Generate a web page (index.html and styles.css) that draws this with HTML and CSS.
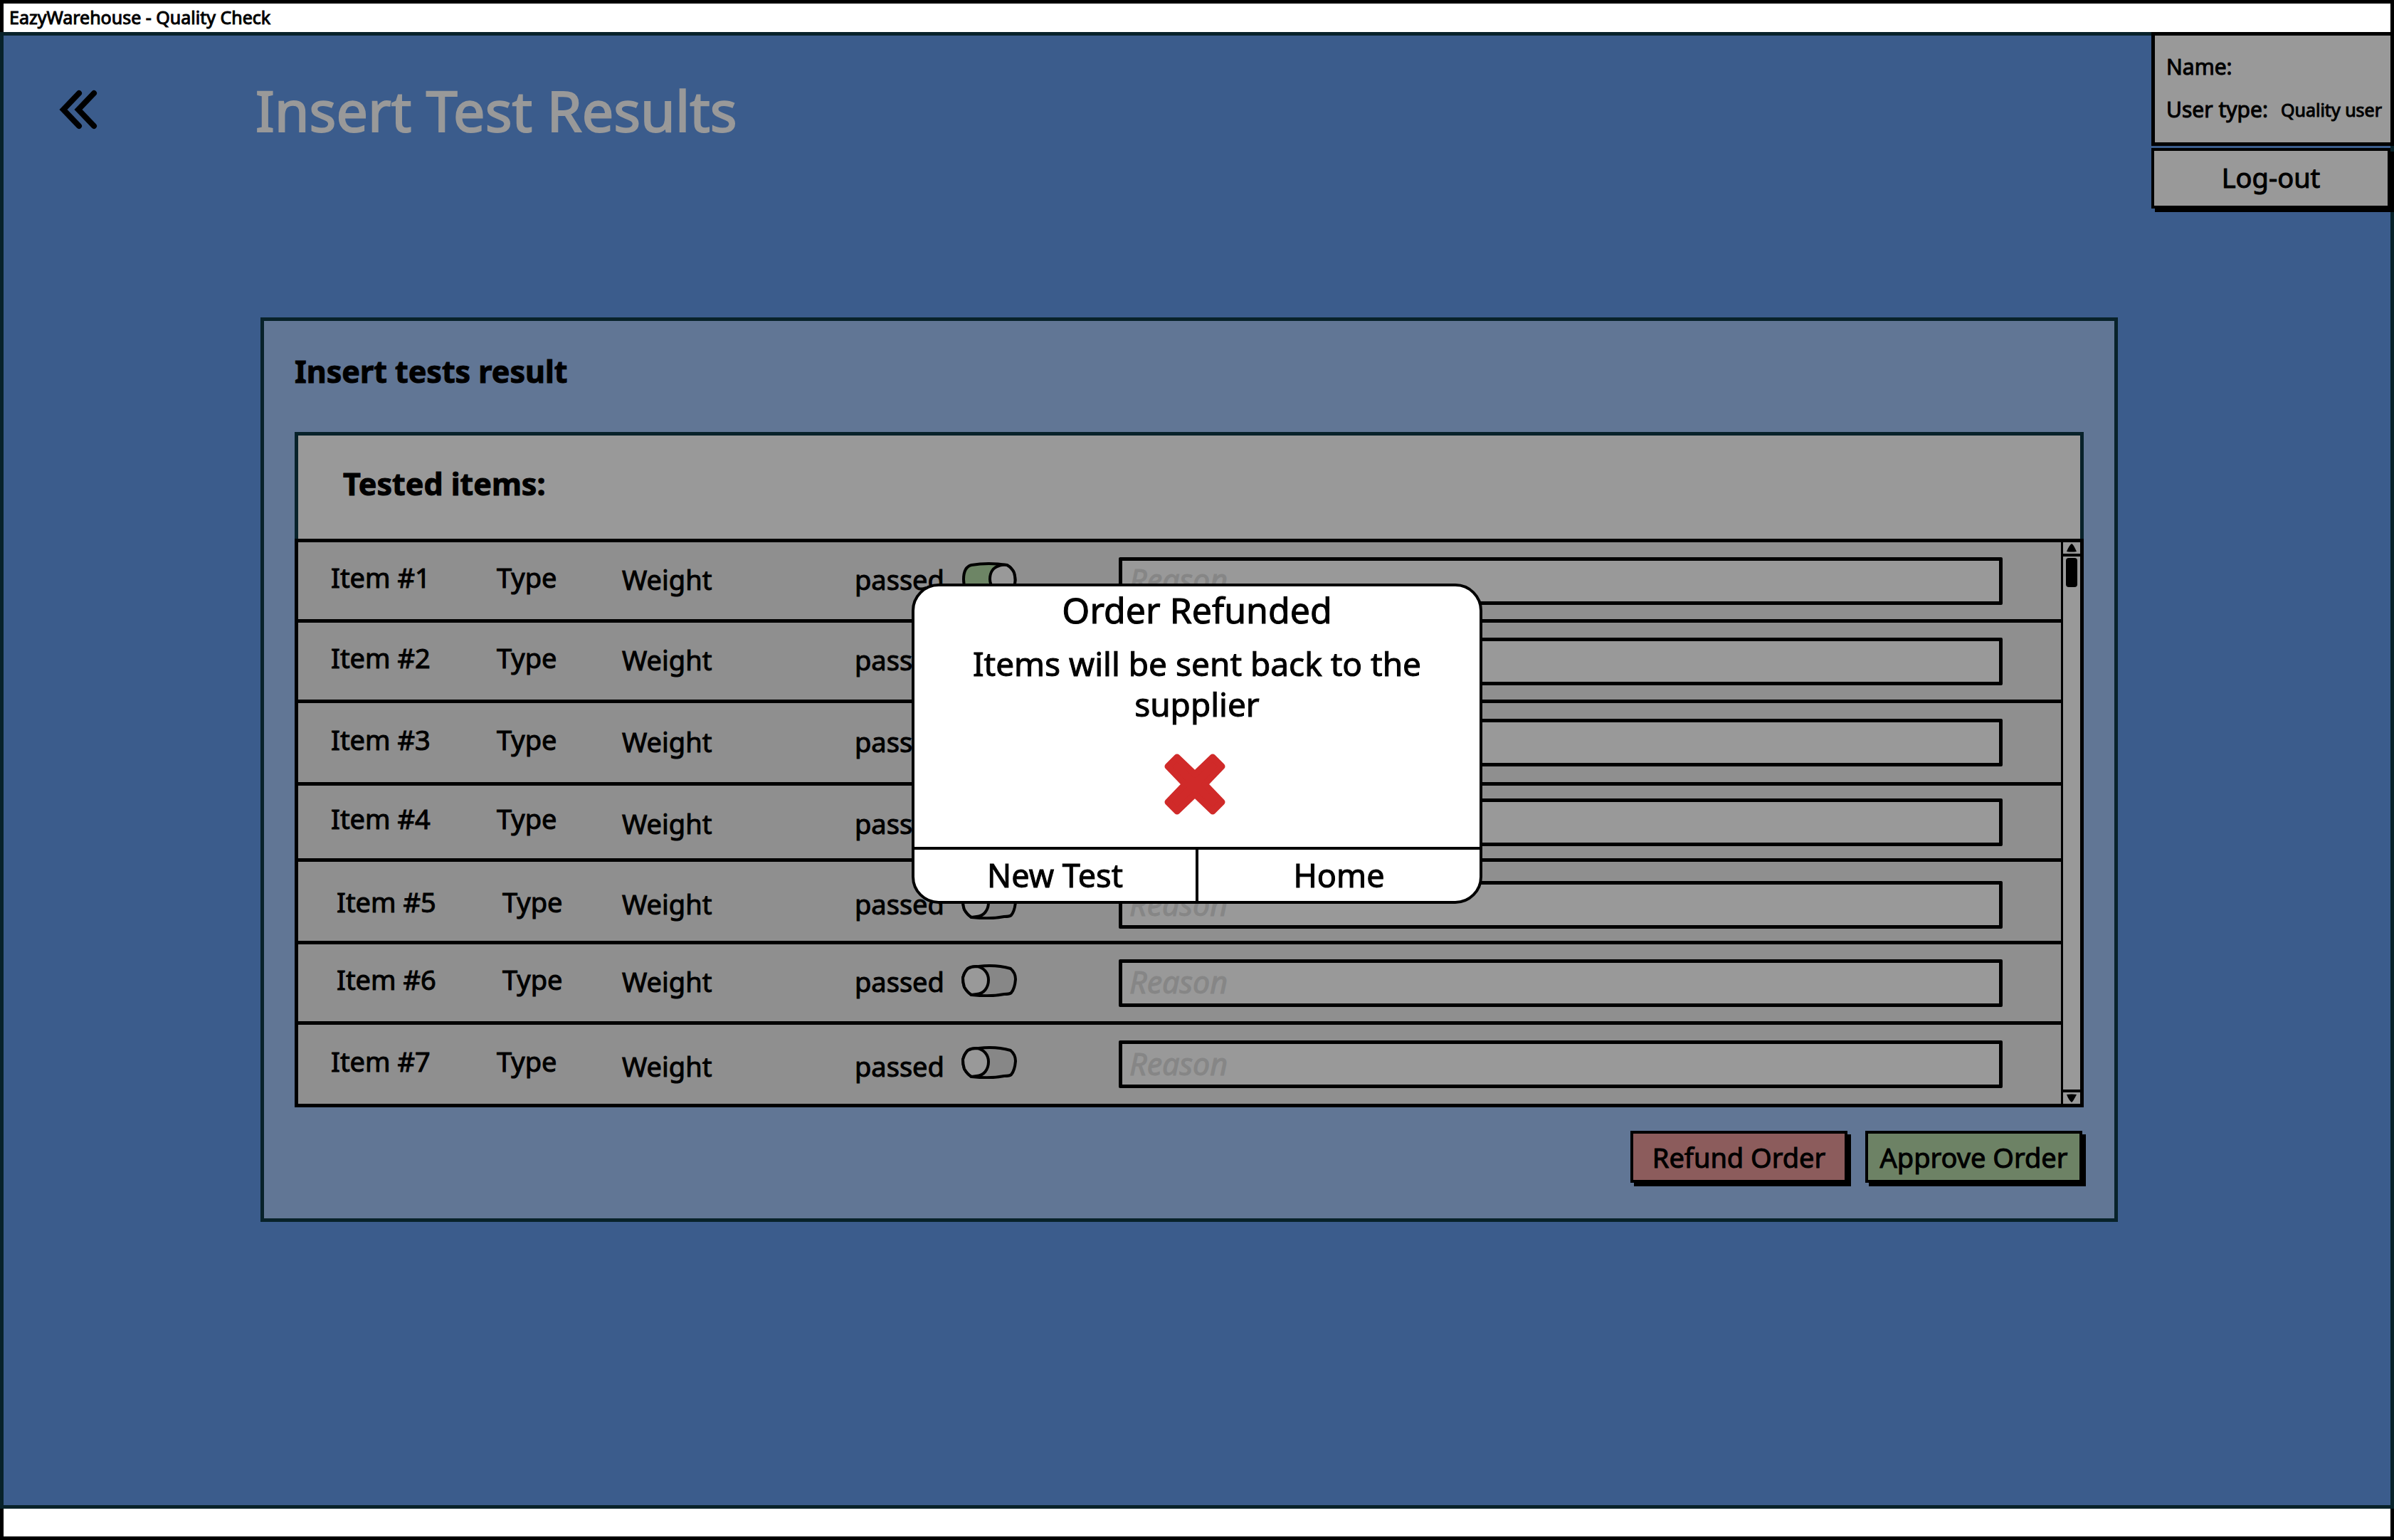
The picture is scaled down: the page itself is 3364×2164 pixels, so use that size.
FILE: index.html
```html
<!DOCTYPE html>
<html lang="en">
<head>
<meta charset="utf-8">
<title>EazyWarehouse - Quality Check</title>
<link rel="stylesheet" href="styles.css">
</head>
<body>
<svg class="defs" aria-hidden="true">
  <symbol id="toggle-off" viewBox="0 0 78 46">
    <path class="track" d="M9 6Q14 3 24 3Q48 0 69 6Q76 12 76 21Q75 34 70 40Q68 42 60 42Q40 46 14 43Q8 39 4 32Q2 26 2 19Q4 11 9 6Z"/>
    <path class="knob" d="M9 6Q14 3 21 3C31 4 38 12 38 22C38 33 31 42 21 42L14 43Q8 39 4 32Q2 26 2 19Q4 11 9 6Z"/>
  </symbol>
  <symbol id="toggle-on" viewBox="0 0 78 46">
    <path class="track on" d="M14 4Q38 0 64 4Q71 8 74 15Q77 26 74 33Q69 43 62 43Q38 46 12 42Q3 38 3 24Q3 7 14 4Z"/>
    <path class="knob" d="M53 5Q58 3 64 4Q71 8 74 15Q77 26 74 33Q69 43 60 43C48 43 40 33 40 24C40 14 45 7 53 5Z"/>
  </symbol>
</svg>

<div class="window-title">EazyWarehouse - Quality Check</div>

<div class="app">
  <header class="top">
    <button class="back" type="button" aria-label="Back">
      <svg viewBox="0 0 54 56"><path d="M28 5L6 28L28 51M49 5L27 28L49 51"/></svg>
    </button>
    <h1>Insert Test Results</h1>
    <aside class="account">
      <dl class="user">
        <div><dt>Name:</dt><dd></dd></div>
        <div><dt>User type:</dt><dd>Quality user</dd></div>
      </dl>
      <button class="btn logout" type="button">Log-out</button>
    </aside>
  </header>

  <main class="panel">
    <h2>Insert tests result</h2>
    <section class="list">
      <h3>Tested items:</h3>
      <div class="list-body">
        <table>
          <tbody>
            <tr>
              <td class="item">Item #1</td><td class="type">Type</td><td class="weight">Weight</td>
              <td class="passed"><label><span>passed</span><input type="checkbox" checked><svg class="toggle"><use href="#toggle-on"/></svg></label></td>
              <td class="reason"><input type="text" placeholder="Reason" aria-label="Reason, item 1"></td>
            </tr>
            <tr>
              <td class="item">Item #2</td><td class="type">Type</td><td class="weight">Weight</td>
              <td class="passed"><label><span>passed</span><input type="checkbox"><svg class="toggle"><use href="#toggle-off"/></svg></label></td>
              <td class="reason"><input type="text" placeholder="Reason" aria-label="Reason, item 2"></td>
            </tr>
            <tr class="tall">
              <td class="item">Item #3</td><td class="type">Type</td><td class="weight">Weight</td>
              <td class="passed"><label><span>passed</span><input type="checkbox"><svg class="toggle"><use href="#toggle-off"/></svg></label></td>
              <td class="reason"><input type="text" placeholder="Reason" aria-label="Reason, item 3"></td>
            </tr>
            <tr class="short drop">
              <td class="item">Item #4</td><td class="type">Type</td><td class="weight">Weight</td>
              <td class="passed"><label><span>passed</span><input type="checkbox"><svg class="toggle"><use href="#toggle-off"/></svg></label></td>
              <td class="reason"><input type="text" placeholder="Reason" aria-label="Reason, item 4"></td>
            </tr>
            <tr class="tall indent low">
              <td class="item">Item #5</td><td class="type">Type</td><td class="weight">Weight</td>
              <td class="passed"><label><span>passed</span><input type="checkbox"><svg class="toggle"><use href="#toggle-off"/></svg></label></td>
              <td class="reason"><input type="text" placeholder="Reason" aria-label="Reason, item 5"></td>
            </tr>
            <tr class="indent">
              <td class="item">Item #6</td><td class="type">Type</td><td class="weight">Weight</td>
              <td class="passed"><label><span>passed</span><input type="checkbox"><svg class="toggle"><use href="#toggle-off"/></svg></label></td>
              <td class="reason"><input type="text" placeholder="Reason" aria-label="Reason, item 6"></td>
            </tr>
            <tr class="tall drop">
              <td class="item">Item #7</td><td class="type">Type</td><td class="weight">Weight</td>
              <td class="passed"><label><span>passed</span><input type="checkbox"><svg class="toggle"><use href="#toggle-off"/></svg></label></td>
              <td class="reason"><input type="text" placeholder="Reason" aria-label="Reason, item 7"></td>
            </tr>
          </tbody>
        </table>
        <div class="scrollbar" aria-hidden="true">
          <div class="arrow up"><svg viewBox="0 0 14 12"><path d="M7 0Q9 0 14 11Q7 12 0 11Q3 3 7 0Z"/></svg></div>
          <div class="thumb"></div>
          <div class="arrow down"><svg viewBox="0 0 14 12"><path d="M7 12Q9 11 14 1Q7 0 0 1Q3 9 7 12Z"/></svg></div>
        </div>
      </div>
    </section>
    <div class="actions">
      <button class="btn refund" type="button">Refund Order</button>
      <button class="btn approve" type="button">Approve Order</button>
    </div>
  </main>
</div>

<div class="window-foot"></div>

<div class="overlay">
  <div class="dialog" role="dialog" aria-modal="true" aria-labelledby="dialog-title">
    <div class="dialog-body">
      <h2 id="dialog-title">Order Refunded</h2>
      <p>Items will be sent back to the supplier</p>
      <svg class="cross" viewBox="0 0 86 86" aria-hidden="true"><path d="M18 5L43 29L68 5L81 18L57 43L81 68L68 81L43 57L18 81L5 68L29 43L5 18Z"/></svg>
    </div>
    <div class="dialog-actions">
      <button type="button">New Test</button>
      <button type="button">Home</button>
    </div>
  </div>
</div>
</body>
</html>
```
FILE: styles.css
```css
:root {
  --ink: #000;
  --teal: #08222a;
  --grey: #999;
  --row: #8f8f8f;
  --line: 5px;
}

* {
  box-sizing: border-box;
}

body {
  margin: 0;
  min-height: 100vh;
  display: flex;
  flex-direction: column;
  background: #3b5c8c;
  color: var(--ink);
  font-family: "Noto Sans", sans-serif;
  font-size: 38px;
  -webkit-text-stroke: 1px currentColor;
}

h1, h2, h3, p, dl, dd {
  margin: 0;
}

button, input {
  font: inherit;
  color: inherit;
}

button {
  cursor: pointer;
}

.defs {
  position: absolute;
  width: 0;
  height: 0;
}

.window-title,
.window-foot {
  border: var(--line) solid var(--ink);
  background: #fff;
}

.window-title {
  height: 45px;
  padding-left: 8px;
  border-bottom: 0;
  font-size: 25px;
  line-height: 38px;
}

.window-foot {
  height: 44px;
  border-top: 0;
}

.app {
  flex: 1;
  border: var(--line) solid var(--teal);
}

.top {
  display: flex;
  align-items: flex-start;
  margin: -5px -5px 0 0;
}

.back {
  margin: 81px 0 0 78px;
  padding: 0;
  border: 0;
  background: none;
}

.back svg {
  display: block;
  width: 54px;
  height: 56px;
  fill: none;
  stroke: var(--ink);
  stroke-width: 8;
  stroke-linecap: round;
}

h1 {
  margin: 56px 0 0 222px;
  color: var(--grey);
  font-size: 79px;
  font-weight: 400;
  line-height: 108px;
  -webkit-text-stroke-width: 2px;
}

.account {
  width: 341px;
  margin-left: auto;
}

.user {
  height: 160px;
  padding: 14px 0 0 16px;
  border: var(--line) solid var(--ink);
  background: var(--grey);
  font-size: 30px;
  line-height: 60px;
}

.user div {
  display: flex;
  gap: 18px;
}

.user dd {
  font-size: 25px;
}

.btn {
  padding: 0;
  border: 4px solid var(--ink);
  box-shadow: 5px 5px 0 var(--ink);
}

.logout {
  width: 336px;
  height: 85px;
  margin-top: 3px;
  padding-bottom: 4px;
  background: var(--grey);
}

.panel {
  margin: 153px 383px 0 361px;
  padding: 36px 43px 50px;
  border: var(--line) solid var(--teal);
  background: #617695;
}

.panel h2,
.panel h3 {
  font-size: 43px;
  line-height: 70px;
}

.list {
  margin-top: 50px;
}

.list h3 {
  height: 150px;
  padding: 33px 0 0 63px;
  border: var(--line) solid var(--teal);
  border-bottom: 0;
  background: var(--grey);
}

.list-body {
  display: flex;
  border: var(--line) solid var(--ink);
  border-bottom: 0;
  background: var(--grey);
}

table {
  flex: 1;
  table-layout: fixed;
  border-spacing: 0;
  background: var(--row);
}

tr {
  height: 113px;
}

tr.tall {
  height: 116px;
}

tr.short {
  height: 107px;
}

td {
  padding: 0;
  border-bottom: var(--line) solid var(--ink);
  line-height: 52px;
}

.item {
  width: 279px;
  padding: 0 0 10px 46px;
}

.type {
  width: 176px;
  padding-bottom: 10px;
}

.indent .item {
  padding-left: 54px;
}

.indent .type {
  padding-left: 8px;
}

.weight {
  width: 327px;
  padding-bottom: 4px;
}

.passed {
  width: 371px;
}

.passed label {
  position: relative;
  display: flex;
  align-items: center;
  width: 228px;
}

.passed span {
  padding-bottom: 4px;
}

.passed input {
  position: absolute;
  right: 0;
  width: 78px;
  height: 46px;
  margin: 0;
  opacity: 0;
}

.toggle {
  width: 78px;
  height: 46px;
  margin: 0 0 6px auto;
}

.drop .weight,
.drop .passed span {
  padding-top: 8px;
}

.low td {
  padding-top: 10px;
}

.track,
.knob {
  fill: var(--grey);
  stroke: var(--ink);
  stroke-width: 4;
}

.track {
  fill: #878787;
}

.track.on {
  fill: #6d8565;
}

.reason {
  padding-right: 82px;
}

.reason input {
  display: block;
  width: 100%;
  height: 67px;
  padding: 0 10px;
  border: var(--line) solid var(--ink);
  border-radius: 2px;
  background: var(--grey);
}

.reason input::placeholder {
  color: #868686;
  font-size: 43px;
  font-style: italic;
  opacity: 1;
}

.scrollbar {
  display: flex;
  flex-direction: column;
  width: 27px;
  border-left: 3px solid var(--ink);
  border-bottom: var(--line) solid var(--ink);
}

.arrow {
  display: flex;
  align-items: center;
  justify-content: center;
  height: 20px;
}

.arrow svg {
  width: 14px;
  height: 12px;
}

.arrow.up {
  border-bottom: 4px solid var(--ink);
}

.arrow.down {
  margin-top: auto;
  border-top: 4px solid var(--ink);
}

.thumb {
  width: 16px;
  height: 41px;
  margin: 2px auto 0;
  border-radius: 4px;
  background: var(--ink);
}

.actions {
  display: flex;
  justify-content: flex-end;
  gap: 25px;
  margin-top: 33px;
  padding-right: 2px;
}

.actions .btn {
  width: 305px;
  height: 73px;
}

.refund {
  background: #8c5c5c;
}

.approve {
  background: #6d8265;
}

.overlay {
  position: fixed;
  inset: 0;
  display: flex;
  align-items: center;
  justify-content: center;
  padding-bottom: 74px;
}

.dialog {
  width: 802px;
  border: 4px solid var(--ink);
  border-radius: 38px;
  background: #fff;
  overflow: hidden;
}

.dialog-body {
  display: flex;
  flex-direction: column;
  align-items: center;
  height: 366px;
  text-align: center;
}

.dialog h2 {
  font-size: 50px;
  font-weight: 400;
  line-height: 66px;
}

.dialog p {
  width: 660px;
  margin-top: 14px;
  font-size: 46px;
  line-height: 57px;
}

.cross {
  width: 86px;
  height: 86px;
  margin: 41px 6px 0 0;
  fill: #d02a29;
  stroke: #d02a29;
  stroke-width: 9;
  stroke-linejoin: round;
}

.dialog-actions {
  display: flex;
  border-top: 4px solid var(--ink);
}

.dialog-actions button {
  flex: 1;
  height: 72px;
  padding: 0 0 2px;
  border: 0;
  background: none;
  font-size: 45px;
}

.dialog-actions button + button {
  border-left: 4px solid var(--ink);
}
```
